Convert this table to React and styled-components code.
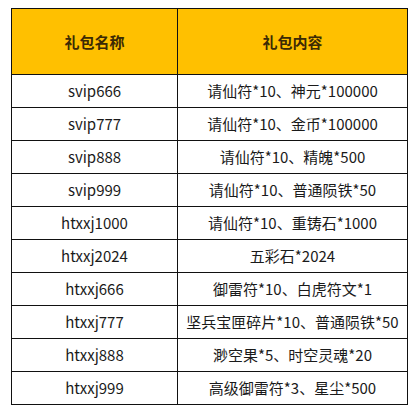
import React from "react";
import styled, { createGlobalStyle } from "styled-components";

const Global = createGlobalStyle`
  html, body { margin: 0; padding: 0; background: #fff; }
  body { font-family: "Noto Sans CJK SC", "Microsoft YaHei", sans-serif; }
`;

const Page = styled.div`
  padding: 8px 13px 0 11px;
  width: 417px;
  box-sizing: border-box;
`;

const Table = styled.table`
  border-collapse: collapse;
  width: 394px;
  table-layout: fixed;
  font-family: "Noto Sans CJK SC", sans-serif;
  font-size: 15px;
  color: #1a1a1a;
`;

const HeadCell = styled.th`
  background: #ffc000;
  border: 1px solid #111;
  height: 65px;
  padding: 0;
  font-weight: 700;
  color: #3b2a05;
  text-align: center;
  width: ${(p) => p.$w}px;
`;

const Cell = styled.td`
  border: 1px solid #111;
  height: 32px;
  padding: 0;
  text-align: center;
  white-space: nowrap;
  line-height: 32px;
`;

const rows = [
  ["svip666", "请仙符*10、神元*100000"],
  ["svip777", "请仙符*10、金币*100000"],
  ["svip888", "请仙符*10、精魄*500"],
  ["svip999", "请仙符*10、普通陨铁*50"],
  ["htxxj1000", "请仙符*10、重铸石*1000"],
  ["htxxj2024", "五彩石*2024"],
  ["htxxj666", "御雷符*10、白虎符文*1"],
  ["htxxj777", "坚兵宝匣碎片*10、普通陨铁*50"],
  ["htxxj888", "渺空果*5、时空灵魂*20"],
  ["htxxj999", "高级御雷符*3、星尘*500"],
];

export default function App() {
  return (
    <Page>
      <Global />
      <Table>
        <thead>
          <tr>
            <HeadCell $w={165}>礼包名称</HeadCell>
            <HeadCell $w={229}>礼包内容</HeadCell>
          </tr>
        </thead>
        <tbody>
          {rows.map(([a, b]) => (
            <tr key={a}>
              <Cell>{a}</Cell>
              <Cell>{b}</Cell>
            </tr>
          ))}
        </tbody>
      </Table>
    </Page>
  );
}
